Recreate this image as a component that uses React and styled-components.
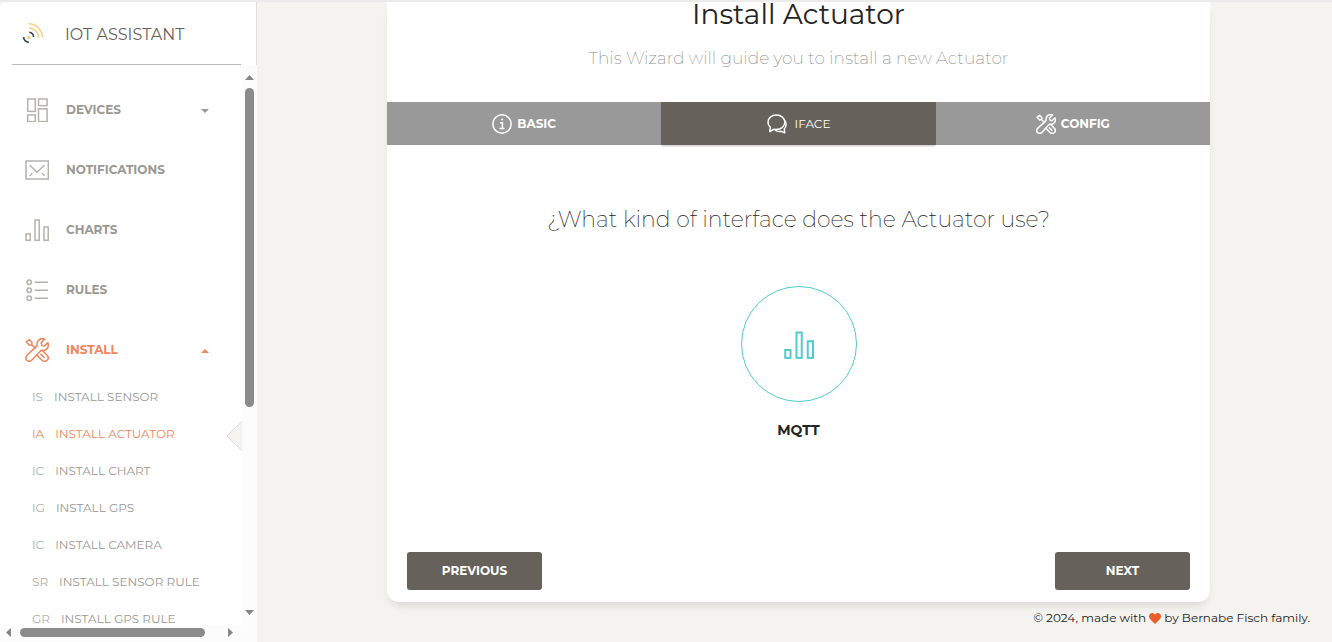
import React from "react";
import styled, { createGlobalStyle } from "styled-components";

const GlobalStyle = createGlobalStyle`
  *, *::before, *::after { box-sizing: border-box; }
  body {
    margin: 0;
    background: #f4f3ef;
    color: #252422;
    font-family: Montserrat, Inter, "Open Sans", sans-serif;
    font-size: 12px;
  }
`;

const Page = styled.div`
  display: flex;
  min-height: 100vh;
  border-top: 2px solid #ebebeb;
`;

/* Sidebar */

const Sidebar = styled.aside`
  display: flex;
  flex-direction: column;
  flex: none;
  width: 257px;
  height: calc(100vh - 2px);
  background: #fff;
  border-top-left-radius: 6px;
`;

const Brand = styled.a`
  display: flex;
  align-items: center;
  gap: 20px;
  height: 63px;
  padding: 2px 0 0 21px;
  border-right: 1px solid #ddd;
  color: #66615b;
  font-size: 16px;
  line-height: 24px;
  text-decoration: none;
  position: relative;

  &::after {
    content: "";
    position: absolute;
    left: 12px;
    right: 15px;
    bottom: 0;
    height: 1px;
    background: #bbb9b6;
  }
`;

const ScrollArea = styled.div`
  display: grid;
  grid-template-columns: 1fr 15px;
  grid-template-rows: 1fr 17px;
  flex: 1;
  min-height: 0;
  background: #fcfcfc;
`;

const Nav = styled.nav`
  overflow: hidden;
  min-height: 0;
  padding-top: 23px;
  background: #fff;
`;

const NavList = styled.ul`
  display: flex;
  flex-direction: column;
  gap: 16px;
  margin: 0;
  padding: 0;
  list-style: none;
`;

const NavLink = styled.a`
  display: flex;
  align-items: center;
  gap: 17px;
  height: 44px;
  padding: 0 33px 0 25px;
  color: ${(p) => (p.$active ? "#f0845c" : "#9b9893")};
  font-size: 12px;
  font-weight: 700;
  line-height: 20px;
  text-decoration: none;

  svg { flex: none; }
`;

const NavLabel = styled.span`
  flex: 1;
`;

const NavIcon = styled.svg`
  width: 24px;
  height: 24px;
  fill: none;
  stroke: ${(p) => (p.$active ? "#f0845c" : "#b5b2ae")};
  stroke-width: 1.5;
`;

const Caret = styled.svg`
  width: 8px;
  height: 4px;
  margin-top: 2px;
  fill: currentColor;
`;

const SubList = styled.ul`
  margin: 0;
  padding: 6px 0 0;
  list-style: none;
`;

const SubItem = styled.li`
  position: relative;
`;

const SubLink = styled.a`
  display: flex;
  align-items: center;
  gap: 11px;
  height: 37px;
  padding-left: 32px;
  color: ${(p) => (p.$active ? "#f0845c" : "#9b9893")};
  font-size: 12px;
  font-weight: 400;
  line-height: 20px;
  text-decoration: none;
  white-space: nowrap;
`;

const Initials = styled.span`
  opacity: ${(p) => (p.$active ? 1 : 0.8)};
`;

const Notch = styled.svg`
  position: absolute;
  right: 0;
  top: 5px;
  width: 16px;
  height: 32px;
  fill: #f4f3ef;
  stroke: #dddbd7;
`;

const VerticalBar = styled.div`
  display: flex;
  flex-direction: column;
  align-items: center;
  padding: 10px 0;
`;

const VerticalTrack = styled.div`
  flex: 1;
  width: 9px;
  margin: 8px 0;
`;

const VerticalThumb = styled.div`
  height: 62%;
  border-radius: 5px;
  background: #8b8b8b;
`;

const HorizontalBar = styled.div`
  display: flex;
  align-items: center;
  padding: 0 9px 3px 6px;
`;

const HorizontalTrack = styled.div`
  flex: 1;
  margin: 0 9px;
`;

const HorizontalThumb = styled.div`
  width: 93%;
  height: 9px;
  border-radius: 5px;
  background: #8b8b8b;
`;

const Arrow = styled.svg`
  flex: none;
  width: ${(p) => (p.$sideways ? 5 : 9)}px;
  height: ${(p) => (p.$sideways ? 9 : 5)}px;
  fill: #858585;
`;

/* Main panel */

const Main = styled.main`
  flex: 1;
  min-width: 0;
`;

const Content = styled.div`
  padding: 0 122px 0 130px;
`;

const Card = styled.section`
  background: #fff;
  border-radius: 0 0 12px 12px;
  box-shadow: 0 6px 10px -4px rgba(0, 0, 0, 0.15);
  text-align: center;
`;

const CardHeader = styled.header`
  padding-bottom: 32px;
`;

const Title = styled.h3`
  margin: 0 0 20px;
  font-size: 28px;
  font-weight: 400;
  line-height: 24px;
`;

const Subtitle = styled.p`
  margin: 0;
  color: #8c8c8c;
  font-size: 17px;
  font-weight: 200;
  line-height: 24px;
`;

const Tabs = styled.div`
  display: grid;
  grid-template-columns: repeat(3, 1fr);
`;

const Tab = styled.button`
  display: flex;
  align-items: center;
  justify-content: center;
  gap: ${(p) => (p.$active ? 8 : 5)}px;
  height: 43px;
  padding: 0;
  border: 0;
  background: ${(p) => (p.$active ? "#66615b" : "#999")};
  box-shadow: ${(p) => (p.$active ? "0 2px 2px -1px rgba(0, 0, 0, 0.25)" : "none")};
  color: #fff;
  font-family: inherit;
  font-size: 12px;
  font-weight: ${(p) => (p.$active ? 400 : 700)};
  line-height: 20px;
`;

const TabIcon = styled.svg`
  width: 20px;
  height: 20px;
  fill: none;
  stroke: #fff;
  stroke-width: 1.8;
`;

const Step = styled.div`
  display: flex;
  flex-direction: column;
  align-items: center;
  padding: 59px 20px 112px;
`;

const Question = styled.h5`
  margin: 0 0 50px;
  font-size: 22px;
  font-weight: 200;
  line-height: 32px;
`;

const Choice = styled.button`
  display: flex;
  flex-direction: column;
  align-items: center;
  gap: 18px;
  padding: 0;
  border: 0;
  background: none;
  color: #252422;
  font-family: inherit;
  font-size: 14px;
  font-weight: 700;
  line-height: 20px;
`;

const ChoiceCircle = styled.span`
  display: flex;
  align-items: center;
  justify-content: center;
  width: 116px;
  height: 116px;
  border: 1px solid #51cbce;
  border-radius: 50%;
`;

const ChoiceIcon = styled.svg`
  width: 30px;
  height: 30px;
  margin-top: 2px;
  fill: none;
  stroke: #51cbce;
  stroke-width: 1.6;
`;

const Actions = styled.div`
  display: flex;
  justify-content: space-between;
  padding: 0 20px 12px;
`;

const ActionButton = styled.button`
  width: 135px;
  height: 38px;
  padding: 0;
  border: 0;
  border-radius: 3px;
  background: #66615b;
  color: #fff;
  font-family: inherit;
  font-size: 12px;
  font-weight: 700;
  line-height: 20px;
`;

const Footer = styled.footer`
  display: flex;
  justify-content: flex-end;
  align-items: center;
  gap: 3px;
  padding: 6px 22px 0;
  font-size: 12px;
  line-height: 20px;
`;

const Heart = styled.svg`
  width: 12px;
  height: 11px;
  fill: #eb5e28;
`;

/* Drawings, all on a 24-unit grid */

const DevicesArt = () => (
  <>
    <rect x="2.7" y="1" width="7.6" height="12.4" />
    <rect x="2.7" y="17" width="7.6" height="6.6" />
    <rect x="13.5" y="1" width="8.6" height="6.6" />
    <rect x="13.5" y="10.8" width="8.6" height="12.8" />
  </>
);

const MailArt = () => (
  <>
    <rect x="1" y="3" width="22.3" height="18" />
    <path d="M4.7 7 12 14.2 19.6 7M4.7 17.7l2.8-2.5M19.6 17.7l-2.8-2.5" />
  </>
);

const ChartArt = () => (
  <>
    <rect x="1" y="16" width="4.2" height="6.3" />
    <rect x="10" y="2" width="4.2" height="20.3" />
    <rect x="19" y="9" width="4.2" height="13.3" />
  </>
);

const RulesArt = () => (
  <>
    <circle cx="4.2" cy="4.3" r="2.2" />
    <circle cx="4.2" cy="12.3" r="2.2" />
    <circle cx="4.2" cy="20.3" r="2.2" />
    <path d="M9.7 4.3H23M9.7 12.3H23M9.7 20.3H23" />
  </>
);

const ToolsArt = () => (
  <g strokeLinecap="round" strokeLinejoin="round">
    <path d="M1.3 4 4.2 1.6 7 4.3 6.7 6.7 4.4 7.2ZM6.7 6.7 10.2 10.1" />
    <path d="M19.8 1.2c-2.5-1-5.3-.3-6.8 1.8-1 1.4-1.2 3-.8 4.6L2 17.2c-1.5 1.5-1.5 3.7-.2 5 1.5 1.5 3.8 1.3 5.1-.1L16 12.4c2.2.5 4.3 0 5.7-1.5 1.6-1.7 2-4.1 1.1-6.3l-3.5 3.5-2.5-.7-.7-2.6Z" />
    <path d="m11.8 17 5.2 5.3c1.5 1.4 3.8 1.4 5.1 0 1.4-1.5 1.4-3.6 0-5.1L17.3 12.4M16 16.4l3.1 3.1" />
  </g>
);

const InfoArt = () => (
  <>
    <circle cx="12" cy="12" r="11" />
    <path d="M9.5 10.5h3v7M9 17.5h6" />
    <circle cx="12.2" cy="6.7" r="1.2" fill="#fff" stroke="none" />
  </>
);

const ChatArt = () => (
  <g strokeLinejoin="round">
    <path d="M11.2 1.3C5.4 1.3 1.2 5 1.2 9.8c0 2.4 1 4.5 2.7 6L3.3 21l5-2.7c1 .2 1.9.3 2.9.3 5.8 0 10.2-3.9 10.2-8.7S17 1.3 11.2 1.3Z" />
    <path d="M21 7.5c1.200 1.300 1.900 3 1.900 5 0 2.200-.8 4-2.200 5.400l.6 4.800-4.600-2c-2.400.6-5 .2-7-1.200" />
  </g>
);

const NAV_ITEMS = [
  { label: "DEVICES", Art: DevicesArt, caret: "down" },
  { label: "NOTIFICATIONS", Art: MailArt },
  { label: "CHARTS", Art: ChartArt },
  { label: "RULES", Art: RulesArt },
  { label: "INSTALL", Art: ToolsArt, caret: "up", active: true },
];

const SUB_ITEMS = [
  ["IS", "INSTALL SENSOR"],
  ["IA", "INSTALL ACTUATOR"],
  ["IC", "INSTALL CHART"],
  ["IG", "INSTALL GPS"],
  ["IC", "INSTALL CAMERA"],
  ["SR", "INSTALL SENSOR RULE"],
  ["GR", "INSTALL GPS RULE"],
];

const TABS = [
  { label: "BASIC", Art: InfoArt },
  { label: "IFACE", Art: ChatArt, active: true },
  { label: "CONFIG", Art: ToolsArt },
];

const Logo = () => (
  <svg width="24" height="24" viewBox="0 0 24 24" fill="none" aria-hidden="true">
    <g stroke="#f6cf7f" strokeWidth="1.4">
      <path d="M7.5 .7A14 14 0 0 1 21.5 14.5" />
      <path d="M8 5A9.7 9.7 0 0 1 17.5 14.5" />
    </g>
    <path d="M8.3 9.3A5 5 0 0 1 12.6 14" stroke="#34464f" strokeWidth="1.5" />
    <path d="M2.6 14A5.3 5.3 0 0 0 7.8 19.3" stroke="#34464f" strokeWidth="1.7" />
    <circle cx="7.7" cy="14.5" r="1.5" fill="#f7c566" />
  </svg>
);

function SideNav() {
  return (
    <Sidebar>
      <Brand href="#home">
        <Logo />
        IOT ASSISTANT
      </Brand>
      <ScrollArea>
        <Nav aria-label="Main">
          <NavList>
            {NAV_ITEMS.map(({ label, Art, caret, active }) => (
              <li key={label}>
                <NavLink href={`#${label.toLowerCase()}`} $active={active}>
                  <NavIcon viewBox="0 0 24 24" $active={active} aria-hidden="true">
                    <Art />
                  </NavIcon>
                  <NavLabel>{label}</NavLabel>
                  {caret && (
                    <Caret viewBox="0 0 8 4" aria-hidden="true">
                      <path d={caret === "up" ? "M0 4 4 0l4 4Z" : "M0 0h8L4 4Z"} />
                    </Caret>
                  )}
                </NavLink>
                {active && (
                  <SubList>
                    {SUB_ITEMS.map(([initials, text]) => {
                      const current = text === "INSTALL ACTUATOR";
                      return (
                        <SubItem key={text}>
                          <SubLink href="#install" $active={current}>
                            <Initials $active={current}>{initials}</Initials>
                            <span>{text}</span>
                          </SubLink>
                          {current && (
                            <Notch viewBox="0 0 16 32" aria-hidden="true">
                              <path d="M17 0 1 16l16 16" />
                            </Notch>
                          )}
                        </SubItem>
                      );
                    })}
                  </SubList>
                )}
              </li>
            ))}
          </NavList>
        </Nav>
        <VerticalBar aria-hidden="true">
          <Arrow viewBox="0 0 9 5"><path d="M0 5 4.5 0 9 5Z" /></Arrow>
          <VerticalTrack><VerticalThumb /></VerticalTrack>
          <Arrow viewBox="0 0 9 5"><path d="M0 0h9L4.5 5Z" /></Arrow>
        </VerticalBar>
        <HorizontalBar aria-hidden="true">
          <Arrow $sideways viewBox="0 0 5 9"><path d="M5 0v9L0 4.5Z" /></Arrow>
          <HorizontalTrack><HorizontalThumb /></HorizontalTrack>
          <Arrow $sideways viewBox="0 0 5 9"><path d="M0 0v9l5-4.5Z" /></Arrow>
        </HorizontalBar>
      </ScrollArea>
    </Sidebar>
  );
}

export default function App() {
  return (
    <>
      <GlobalStyle />
      <Page>
        <SideNav />
        <Main>
          <Content>
            <Card>
              <CardHeader>
                <Title>Install Actuator</Title>
                <Subtitle>This Wizard will guide you to install a new Actuator</Subtitle>
              </CardHeader>
              <Tabs role="tablist">
                {TABS.map(({ label, Art, active }) => (
                  <Tab key={label} type="button" role="tab" aria-selected={!!active} $active={active}>
                    <TabIcon viewBox="0 0 24 24" aria-hidden="true"><Art /></TabIcon>
                    {label}
                  </Tab>
                ))}
              </Tabs>
              <Step>
                <Question>¿What kind of interface does the Actuator use?</Question>
                <Choice type="button">
                  <ChoiceCircle>
                    <ChoiceIcon viewBox="0 0 24 24" aria-hidden="true"><ChartArt /></ChoiceIcon>
                  </ChoiceCircle>
                  MQTT
                </Choice>
              </Step>
              <Actions>
                <ActionButton type="button">PREVIOUS</ActionButton>
                <ActionButton type="button">NEXT</ActionButton>
              </Actions>
            </Card>
          </Content>
          <Footer>
            <span>© 2024, made with</span>
            <Heart viewBox="0 0 12 11" role="img" aria-label="love">
              <path d="M6 11 1 6C-.4 4.5-.3 2.3.9 1 2.3-.4 4.7-.2 6 1.7 7.3-.2 9.7-.4 11.1 1c1.2 1.3 1.3 3.5-.1 5Z" />
            </Heart>
            <span>by Bernabe Fisch family.</span>
          </Footer>
        </Main>
      </Page>
    </>
  );
}
